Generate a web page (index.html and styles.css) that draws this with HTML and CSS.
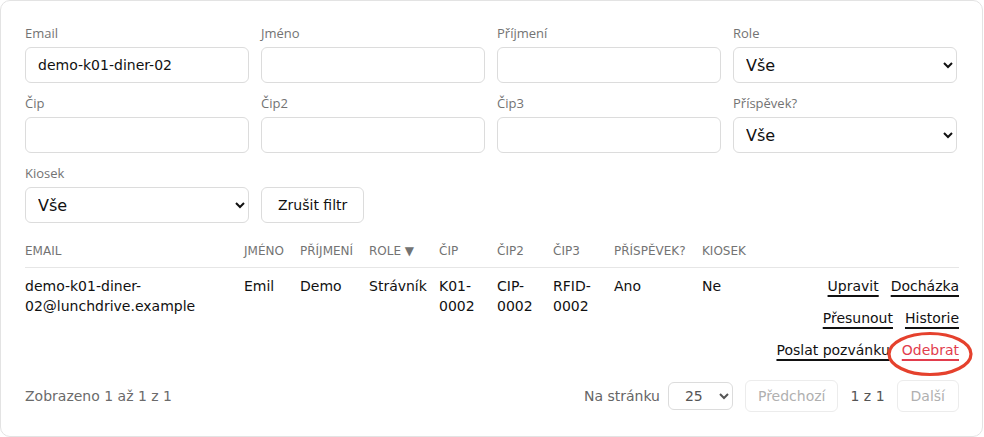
FILE: index.html
```html
<!DOCTYPE html>
<html lang="cs">
<head>
<meta charset="utf-8">
<title>Uživatelé</title>
<link rel="stylesheet" href="styles.css">
</head>
<body>
<div class="card">
  <form class="filters">
    <div class="field">
      <label class="label">Email</label>
      <input class="control" type="text" value="demo-k01-diner-02">
    </div>
    <div class="field">
      <label class="label">Jméno</label>
      <input class="control" type="text">
    </div>
    <div class="field">
      <label class="label">Příjmení</label>
      <input class="control" type="text">
    </div>
    <div class="field">
      <label class="label">Role</label>
      <select class="control select"><option>Vše</option></select>
    </div>
    <div class="field">
      <label class="label">Čip</label>
      <input class="control" type="text">
    </div>
    <div class="field">
      <label class="label">Čip2</label>
      <input class="control" type="text">
    </div>
    <div class="field">
      <label class="label">Čip3</label>
      <input class="control" type="text">
    </div>
    <div class="field">
      <label class="label">Příspěvek?</label>
      <select class="control select"><option>Vše</option></select>
    </div>
    <div class="field">
      <label class="label">Kiosek</label>
      <select class="control select"><option>Vše</option></select>
    </div>
    <div class="field field-end">
      <button type="button" class="btn">Zrušit filtr</button>
    </div>
  </form>

  <table class="table">
    <thead>
      <tr>
        <th class="c-email">Email</th>
        <th class="c-jmeno">Jméno</th>
        <th class="c-prijmeni">Příjmení</th>
        <th class="c-role">Role ▼</th>
        <th class="c-cip">Čip</th>
        <th class="c-cip2">Čip2</th>
        <th class="c-cip3">Čip3</th>
        <th class="c-prisp">Příspěvek?</th>
        <th class="c-kiosek">Kiosek</th>
        <th class="c-actions"></th>
      </tr>
    </thead>
    <tbody>
      <tr>
        <td>demo-k01-diner-02@lunchdrive.example</td>
        <td class="nowrap">Emil</td>
        <td class="nowrap">Demo</td>
        <td class="nowrap">Strávník</td>
        <td>K01-0002</td>
        <td>CIP-0002</td>
        <td>RFID-0002</td>
        <td class="nowrap">Ano</td>
        <td class="nowrap">Ne</td>
        <td class="actions-cell">
          <div class="actions">
            <a href="#" class="link">Upravit</a>
            <a href="#" class="link">Docházka</a>
            <a href="#" class="link">Přesunout</a>
            <a href="#" class="link">Historie</a>
            <a href="#" class="link">Poslat pozvánku</a>
            <a href="#" class="link link-danger">Odebrat<svg class="circle" width="86" height="46" viewBox="0 0 86 46"><ellipse cx="43" cy="23" rx="41" ry="20.5" fill="none" stroke="#e5412d" stroke-width="3.2"/></svg></a>
          </div>
        </td>
      </tr>
    </tbody>
  </table>

  <div class="footer">
    <div class="summary">Zobrazeno 1 až 1 z 1</div>
    <div class="pager">
      <div class="per-page">
        <span class="pager-label">Na stránku</span>
        <select class="page-select"><option>25</option></select>
      </div>
      <button type="button" class="btn btn-page btn-prev" disabled>Předchozí</button>
      <span class="page-info">1 z 1</span>
      <button type="button" class="btn btn-page" disabled>Další</button>
    </div>
  </div>
</div>
</body>
</html>
```

FILE: styles.css
```css
* { box-sizing: border-box; }

html, body {
  margin: 0;
  padding: 0;
  background: #ffffff;
}

body {
  font-family: "DejaVu Sans", sans-serif;
  font-size: 14px;
  color: #111111;
}

.card {
  width: 983px;
  border: 1px solid #e3e3e3;
  border-radius: 10px;
  padding: 24px;
  background: #ffffff;
}

.filters {
  display: grid;
  grid-template-columns: repeat(4, 1fr);
  gap: 12px;
  margin: 0;
  width: calc(100% - 1px);
}

.field {
  display: flex;
  flex-direction: column;
}

.field-end {
  justify-content: flex-end;
  align-items: flex-start;
}

.label {
  font-family: "Open Sans", sans-serif;
  font-size: 13px;
  line-height: 16px;
  color: #737373;
  margin-bottom: 6px;
}

.control {
  height: 36px;
  width: 100%;
  border: 1px solid #dcdcdc;
  border-radius: 6px;
  background: #ffffff;
  padding: 0 12px;
  font-family: "DejaVu Sans", sans-serif;
  font-size: 14px;
  color: #111111;
  outline: none;
}

.select {
  font-size: 16px;
  padding: 0 8px;
}

.btn {
  height: 36px;
  padding: 0 16px;
  border: 1px solid #dcdcdc;
  border-radius: 6px;
  background: #ffffff;
  font-family: "DejaVu Sans", sans-serif;
  font-size: 14px;
  color: #111111;
}

.table {
  width: 934px;
  margin-top: 12px;
  border-collapse: collapse;
  table-layout: fixed;
}

.table th {
  text-align: left;
  font-weight: normal;
  font-size: 12px;
  line-height: 16px;
  text-transform: uppercase;
  color: #737373;
  padding: 8px 12px 8px 0;
  border-bottom: 1px solid #e6e6e6;
  white-space: nowrap;
}

.table td {
  vertical-align: top;
  font-size: 14px;
  line-height: 20px;
  padding: 8px 12px 8px 0;
}

.c-email { width: 219px; }
.c-jmeno { width: 56px; }
.c-prijmeni { width: 69px; }
.c-role { width: 70px; }
.c-cip { width: 58px; }
.c-cip2 { width: 56px; }
.c-cip3 { width: 61px; }
.c-prisp { width: 88px; }
.c-kiosek { width: 68px; }
.c-actions { width: 189px; }

.nowrap { white-space: nowrap; }

.table td.actions-cell {
  padding-right: 0;
}

.actions {
  display: flex;
  flex-wrap: wrap;
  justify-content: flex-end;
  column-gap: 12px;
  row-gap: 12px;
}

.link {
  position: relative;
  color: #111111;
  text-decoration: underline;
  text-decoration-thickness: 1.5px;
  text-underline-offset: 4px;
  white-space: nowrap;
}

.link-danger {
  color: #e23d4d;
}

.circle {
  position: absolute;
  left: -15px;
  top: -9px;
  pointer-events: none;
}

.footer {
  display: flex;
  justify-content: space-between;
  align-items: center;
  margin-top: 12px;
  height: 32px;
}

.summary {
  color: #6b6b6b;
  font-size: 14px;
}

.pager {
  display: flex;
  align-items: center;
  gap: 12px;
  margin-right: -1px;
}

.per-page {
  display: flex;
  align-items: center;
  gap: 8px;
}

.pager-label {
  color: #666666;
}

.page-select {
  height: 28px;
  width: 65px;
  border: 1px solid #dcdcdc;
  border-radius: 6px;
  background: #ffffff;
  padding: 0 8px 0 12px;
  font-family: "DejaVu Sans", sans-serif;
  font-size: 14px;
  color: #555555;
}

.btn-page {
  height: 32px;
  padding: 0 13px;
  border-color: #ececec;
  color: #b0b0b0;
}

.btn-prev {
  padding: 0 12px;
}

.page-info {
  color: #555555;
}
```
